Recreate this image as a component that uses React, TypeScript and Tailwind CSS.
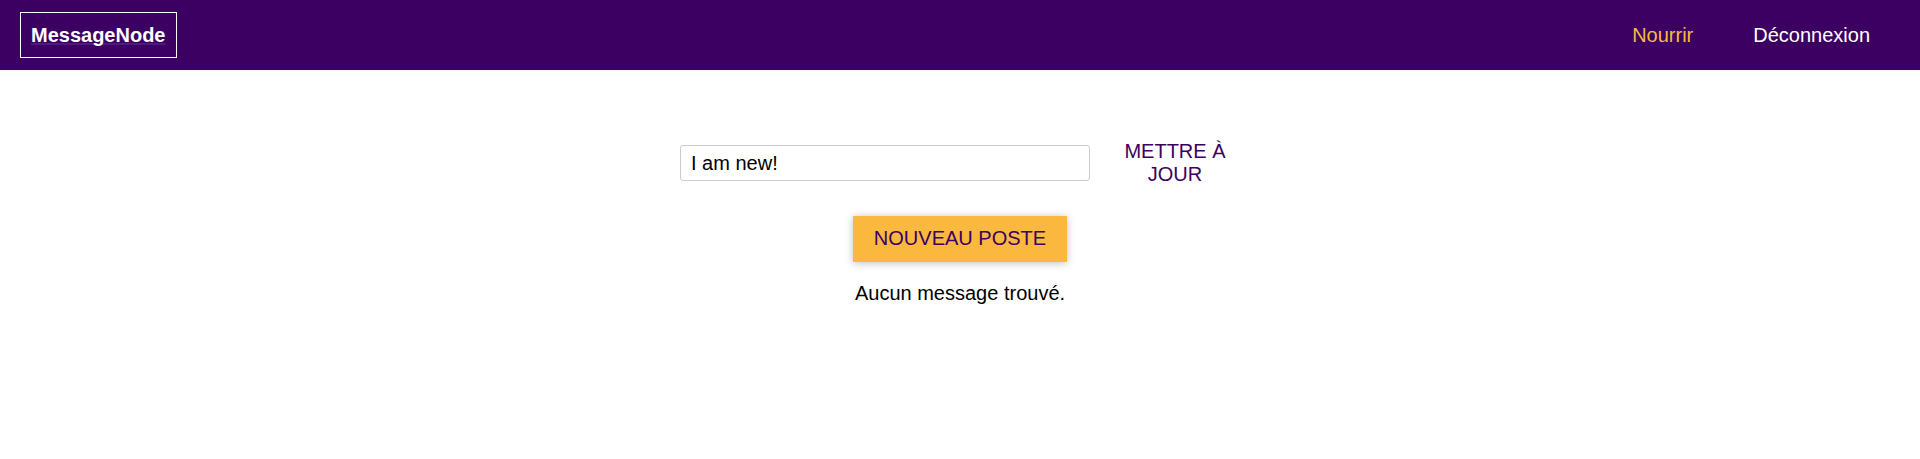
import { useState } from "react";

export default function App() {
  const [status, setStatus] = useState("I am new!");

  return (
    <div className="min-h-screen bg-white font-['Liberation_Sans',Arial,sans-serif] text-[20px] leading-[23px] text-black">
      <header className="flex h-[70px] items-center justify-between bg-[#3b0062] px-5">
        <a
          href="#"
          className="border border-white px-[10px] pt-[11px] pb-[10px] font-bold text-white underline decoration-[#521783] decoration-2 underline-offset-1 [text-decoration-skip-ink:none]"
        >
          MessageNode
        </a>
        <nav className="flex">
          <a href="#" className="px-[30px] text-[#fab83f]">
            Nourrir
          </a>
          <a href="#" className="px-[30px] text-white">
            Déconnexion
          </a>
        </nav>
      </header>
      <main className="flex flex-col items-center px-5 pt-[70px]">
        <form
          className="flex w-full max-w-[560px] items-center gap-5"
          onSubmit={(e) => e.preventDefault()}
        >
          <input
            type="text"
            aria-label="Statut"
            value={status}
            onChange={(e) => setStatus(e.target.value)}
            className="h-9 min-w-0 flex-1 rounded-[3px] border border-[#cccccc] px-[10px]"
          />
          <button type="submit" className="w-[130px] px-[14px] text-center text-[#3b0062] uppercase">
            Mettre à jour
          </button>
        </form>
        <button
          type="button"
          className="mt-[30px] border border-[#fab83f] bg-[#fab83f] px-5 pt-[10px] pb-[11px] text-[#3b0062] uppercase shadow-[0_1px_8px_rgba(0,0,0,0.26)]"
        >
          Nouveau poste
        </button>
        <p className="mt-5">Aucun message trouvé.</p>
      </main>
    </div>
  );
}
